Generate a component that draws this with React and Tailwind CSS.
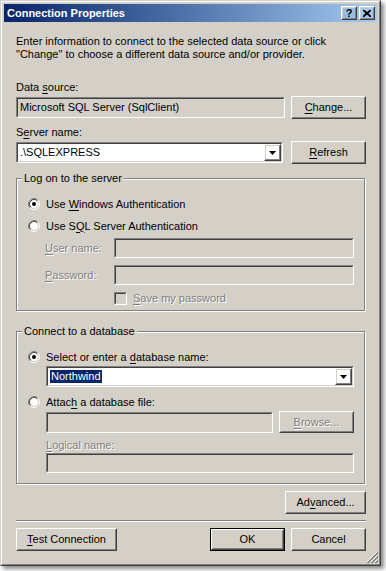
import React from "react";

const FONT = "font-['Liberation_Sans',Arial,sans-serif]";
const RAISED_OUT = "border border-t-white border-l-white border-r-[#404040] border-b-[#404040]";
const RAISED_IN = "border border-t-[#d4d0c8] border-l-[#d4d0c8] border-r-[#808080] border-b-[#808080]";
const SUNK_OUT = "border border-t-[#808080] border-l-[#808080] border-r-white border-b-white";
const SUNK_IN = "border border-t-[#404040] border-l-[#404040] border-r-[#d4d0c8] border-b-[#d4d0c8]";
const DIS = "text-[#808080] [text-shadow:1px_1px_0_#fff]";

function Button({ className = "", children, disabled, isDefault }) {
  const inner = (
    <div className={`${RAISED_OUT} w-full h-full`}>
      <div className={`${RAISED_IN} w-full h-full flex items-center justify-center`}>
        <span className={disabled ? DIS : "text-black"}>{children}</span>
      </div>
    </div>
  );
  if (isDefault) {
    return <div className={`border border-black shrink-0 ${className}`}>{inner}</div>;
  }
  return <div className={`shrink-0 ${className}`}>{inner}</div>;
}

function Sunken({ className = "", bg = "bg-white", children }) {
  return (
    <div className={`${SUNK_OUT} shrink-0 ${className}`}>
      <div className={`${SUNK_IN} w-full h-full flex items-center ${bg}`}>{children}</div>
    </div>
  );
}

function DropArrow() {
  return (
    <div className={`${RAISED_OUT} w-[17px] h-full shrink-0`}>
      <div className={`${RAISED_IN} w-full h-full flex items-center justify-center`}>
        <svg width="7" height="4" viewBox="0 0 7 4">
          <path d="M0 0H7L3.5 4Z" fill="#000" />
        </svg>
      </div>
    </div>
  );
}

function Combo({ className = "", children }) {
  return (
    <Sunken className={className}>
      <div className="flex-1 pl-[2px] leading-[13px] whitespace-nowrap">{children}</div>
      <DropArrow />
    </Sunken>
  );
}

function Radio({ checked }) {
  return (
    <svg width="12" height="12" viewBox="0 0 12 12" className="shrink-0">
      <circle cx="6" cy="6" r="4.2" fill="#fff" />
      <path d="M9.89 2.11A5.5 5.5 0 0 0 2.11 9.89" stroke="#808080" fill="none" />
      <path d="M2.11 9.89A5.5 5.5 0 0 0 9.89 2.11" stroke="#fff" fill="none" />
      <path d="M9.18 2.82A4.5 4.5 0 0 0 2.82 9.18" stroke="#404040" fill="none" />
      <path d="M2.82 9.18A4.5 4.5 0 0 0 9.18 2.82" stroke="#d4d0c8" fill="none" />
      {checked && <circle cx="6" cy="6" r="2" fill="#000" />}
    </svg>
  );
}

function Group({ title, className = "", children }) {
  return (
    <div className={`relative border border-[#808080] shadow-[inset_1px_1px_0_#fff,1px_1px_0_#fff] ${className}`}>
      <span className="absolute -top-[7px] left-[5px] px-[2px] bg-[#d4d0c8] leading-[13px] whitespace-nowrap">
        {title}
      </span>
      {children}
    </div>
  );
}

function U({ children }) {
  return <u className="underline underline-offset-[2px]">{children}</u>;
}

export default function App() {
  return (
    <div className={`w-[386px] h-[571px] bg-white text-[11px] text-black ${FONT}`}>
      <div className="w-[381px] h-[566px] border border-t-[#d4d0c8] border-l-[#d4d0c8] border-r-[#404040] border-b-[#404040] shadow-[3px_3px_4px_rgba(0,0,0,0.45)]">
        <div className="relative w-full h-full border border-t-white border-l-white border-r-[#808080] border-b-[#808080] p-[2px] bg-[#d4d0c8] flex flex-col">
          {/* Title bar */}
          <div className="h-[18px] shrink-0 flex items-center bg-gradient-to-r from-[#0a246a] to-[#a6caf0] pl-[3px] pr-[2px]">
            <span className="text-white font-bold text-[11px] leading-[13px] flex-1 whitespace-nowrap">
              Connection Properties
            </span>
            <div className="flex gap-[2px]">
              <div className={`${RAISED_OUT} w-[16px] h-[14px]`}>
                <div className={`${RAISED_IN} w-full h-full flex items-center justify-center`}>
                  <span className="font-bold text-[11px] leading-[10px] text-black">?</span>
                </div>
              </div>
              <div className={`${RAISED_OUT} w-[16px] h-[14px]`}>
                <div className={`${RAISED_IN} w-full h-full flex items-center justify-center`}>
                  <svg width="8" height="7" viewBox="0 0 8 7">
                    <path d="M0.5 0.5L7.5 6.5M1.5 0.5L7.5 5.5M7.5 0.5L0.5 6.5M6.5 0.5L0.5 5.5" stroke="#000" strokeWidth="1" fill="none" />
                    <path d="M0 0L8 7M8 0L0 7" stroke="#000" strokeWidth="1.6" fill="none" />
                  </svg>
                </div>
              </div>
            </div>
          </div>

          {/* Content */}
          <div className="flex flex-col pl-[12px] pr-[11px]">
            <p className="mt-[13px] leading-[13px] whitespace-nowrap">
              Enter information to connect to the selected data source or click
              <br />
              "Change" to choose a different data source and/or provider.
            </p>

            <div className="mt-[20px] leading-[13px]">
              Data <U>s</U>ource:
            </div>
            <div className="mt-[2px] h-[23px] flex items-center justify-between">
              <Sunken className="w-[269px] h-[21px]" bg="bg-[#d4d0c8]">
                <span className="pl-[2px] leading-[13px] whitespace-nowrap">Microsoft SQL Server (SqlClient)</span>
              </Sunken>
              <Button className="w-[75px] h-[23px]">
                <U>C</U>hange...
              </Button>
            </div>

            <div className="mt-[7px] leading-[13px]">
              S<U>e</U>rver name:
            </div>
            <div className="mt-[2px] h-[23px] flex items-center justify-between">
              <Combo className="w-[267px] h-[21px]">.\SQLEXPRESS</Combo>
              <Button className="w-[75px] h-[23px]">
                <U>R</U>efresh
              </Button>
            </div>

            {/* Log on group */}
            <Group title="Log on to the server" className="mt-[14px] w-[349px] h-[133px]">
              <div className="pt-[18px] pl-[11px] flex flex-col">
                <div className="h-[14px] flex items-center gap-[6px]">
                  <Radio checked />
                  <span className="leading-[13px]">
                    Use <U>W</U>indows Authentication
                  </span>
                </div>
                <div className="mt-[8px] h-[14px] flex items-center gap-[6px]">
                  <Radio />
                  <span className="leading-[13px]">
                    Use S<U>Q</U>L Server Authentication
                  </span>
                </div>
                <div className="mt-[5px] h-[20px] flex items-center pl-[17px]">
                  <span className={`w-[69px] leading-[13px] ${DIS}`}>
                    <U>U</U>ser name:
                  </span>
                  <Sunken className="w-[240px] h-[20px]" bg="bg-[#d4d0c8]" />
                </div>
                <div className="mt-[7px] h-[20px] flex items-center pl-[17px]">
                  <span className={`w-[69px] leading-[13px] ${DIS}`}>
                    <U>P</U>assword:
                  </span>
                  <Sunken className="w-[240px] h-[20px]" bg="bg-[#d4d0c8]" />
                </div>
                <div className="mt-[7px] h-[13px] flex items-center pl-[86px] gap-[6px]">
                  <Sunken className="w-[13px] h-[13px]" bg="bg-[#d4d0c8]" />
                  <span className={`leading-[13px] ${DIS}`}>
                    <U>S</U>ave my password
                  </span>
                </div>
              </div>
            </Group>

            {/* Connect group */}
            <Group title="Connect to a database" className="mt-[20px] w-[349px] h-[153px]">
              <div className="pt-[18px] pl-[11px] flex flex-col">
                <div className="h-[14px] flex items-center gap-[6px]">
                  <Radio checked />
                  <span className="leading-[13px]">
                    Select or enter a <U>d</U>atabase name:
                  </span>
                </div>
                <div className="mt-[2px] pl-[18px]">
                  <Combo className="w-[308px] h-[21px]">
                    <span className="bg-[#0a246a] text-white px-[1px] inline-block leading-[13px]">Northwind</span>
                  </Combo>
                </div>
                <div className="mt-[8px] h-[14px] flex items-center gap-[6px]">
                  <Radio />
                  <span className="leading-[13px]">
                    Attac<U>h</U> a database file:
                  </span>
                </div>
                <div className="mt-[2px] h-[22px] pl-[18px] flex items-center gap-[6px]">
                  <Sunken className="w-[227px] h-[21px]" bg="bg-[#d4d0c8]" />
                  <Button className="w-[75px] h-[22px]" disabled>
                    <U>B</U>rowse...
                  </Button>
                </div>
                <div className={`mt-[6px] pl-[18px] leading-[13px] ${DIS}`}>
                  <U>L</U>ogical name:
                </div>
                <div className="mt-[1px] pl-[18px]">
                  <Sunken className="w-[308px] h-[20px]" bg="bg-[#d4d0c8]" />
                </div>
              </div>
            </Group>

            <div className="mt-[7px] flex justify-end">
              <Button className="w-[81px] h-[23px]">
                Ad<U>v</U>anced...
              </Button>
            </div>

            <div className="mt-[6px] h-[2px] w-[350px] border-t border-t-[#808080] border-b border-b-white" />

            <div className="mt-[6px] h-[23px] flex items-center">
              <Button className="w-[101px] h-[23px]">
                <U>T</U>est Connection
              </Button>
              <div className="flex-1" />
              <Button className="w-[75px] h-[23px]" isDefault>
                OK
              </Button>
              <Button className="w-[75px] h-[23px] ml-[6px]">Cancel</Button>
            </div>
          </div>

          {/* Resize grip */}
          <svg width="12" height="12" viewBox="0 0 12 12" className="absolute right-[1px] bottom-[1px]">
            <path d="M11 1L1 11" stroke="#fff" />
            <path d="M12 1L1 12M12 2L2 12" stroke="#808080" />
            <path d="M11 5L5 11" stroke="#fff" />
            <path d="M12 5L5 12M12 6L6 12" stroke="#808080" />
            <path d="M11 9L9 11" stroke="#fff" />
            <path d="M12 9L9 12M12 10L10 12" stroke="#808080" />
          </svg>
        </div>
      </div>
    </div>
  );
}
